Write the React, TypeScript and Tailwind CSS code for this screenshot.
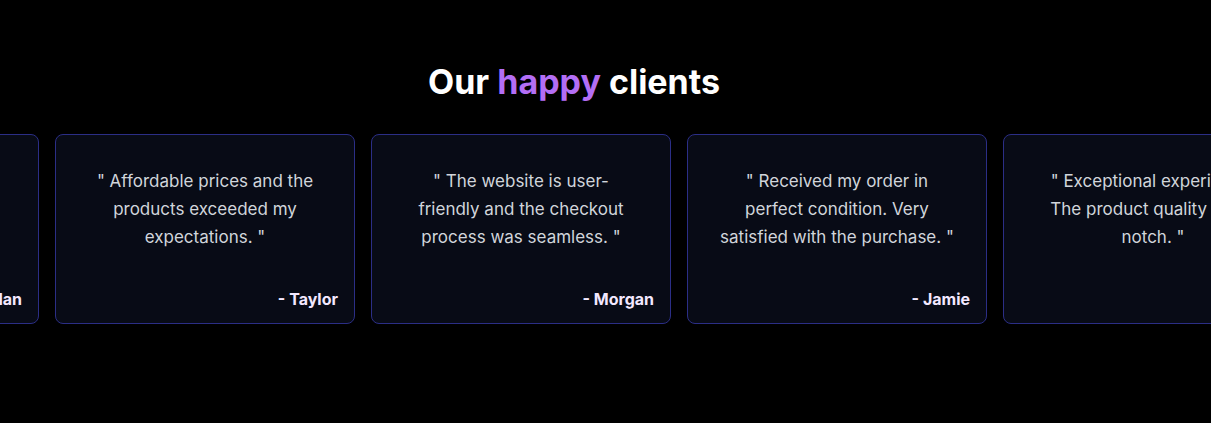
const reviews = [
  { text: "Great customer service and quick delivery. I will come back to shop again.", name: "Dylan" },
  { text: "Affordable prices and the products exceeded my expectations.", name: "Taylor" },
  { text: "The website is user-friendly and the checkout process was seamless.", name: "Morgan" },
  { text: "Received my order in perfect condition. Very satisfied with the purchase.", name: "Jamie" },
  { text: "Exceptional experience! The product quality is top notch.", name: "Casey" },
]

function ReviewCard({ text, name }: { text: string; name: string }) {
  return (
    <div className="flex h-[190px] w-[300px] shrink-0 flex-col justify-between rounded-lg border border-[#2b2e86] bg-[#080b16]">
      <p className="px-8 pt-8 text-center text-[17px] leading-7 text-[#d1d5db]">" {text} "</p>
      <p className="px-4 pb-[10px] text-right text-base font-bold leading-7 text-[#f3e8ff]">- {name}</p>
    </div>
  )
}

export default function App() {
  return (
    <div className="min-h-screen w-full overflow-hidden bg-black font-['Inter',sans-serif]">
      {/* Heading */}
      <div className="flex justify-center pt-[60px] pr-[63px]">
        <h2 className="text-[34px] font-bold leading-[44px] text-white">
          Our <span className="text-[#b36ef5]">happy</span> clients
        </h2>
      </div>

      {/* Marquee track */}
      <div className="mt-[30px] flex gap-4 -translate-x-[261px]">
        {reviews.map((r) => (
          <ReviewCard key={r.name} text={r.text} name={r.name} />
        ))}
      </div>
    </div>
  )
}
